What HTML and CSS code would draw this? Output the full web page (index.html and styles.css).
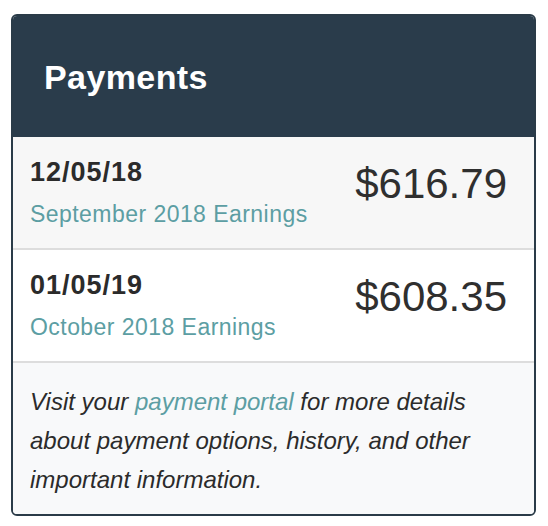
FILE: index.html
```html
<!DOCTYPE html>
<html>
<head>
<meta charset="utf-8">
<link rel="stylesheet" href="styles.css">
</head>
<body>
<div class="card">
  <div class="card-header">
    <h2 class="title">Payments</h2>
  </div>
  <div class="row row-alt">
    <div class="info">
      <div class="date">12/05/18</div>
      <div class="label">September 2018 Earnings</div>
    </div>
    <div class="amount">$616.79</div>
  </div>
  <div class="row">
    <div class="info">
      <div class="date">01/05/19</div>
      <div class="label">October 2018 Earnings</div>
    </div>
    <div class="amount">$608.35</div>
  </div>
  <div class="card-footer">
    <p class="note">Visit your <a class="link" href="#">payment portal</a> for more details about payment options, history, and other important information.</p>
  </div>
</div>
</body>
</html>
```
FILE: styles.css
```css
html, body {
  margin: 0;
  padding: 0;
  background: #ffffff;
}
body {
  padding: 14px 12px 0 11px;
  font-family: "Liberation Sans", Arial, sans-serif;
  color: #2b2b2b;
}
.card {
  width: 521px;
  border: 2px solid #2a3b48;
  border-radius: 6px;
  overflow: hidden;
  background: #fff;
}
.card-header {
  background: #2a3c4b;
  height: 121px;
  display: flex;
  align-items: center;
  padding-left: 31px;
}
.title {
  margin: 0;
  color: #ffffff;
  font-size: 34px;
  font-weight: bold;
  line-height: 40px;
  letter-spacing: 0.4px;
}
.row {
  display: flex;
  justify-content: space-between;
  align-items: flex-start;
  height: 113px;
  box-sizing: border-box;
  padding: 19px 27px 0 17px;
  border-bottom: 2px solid #dddddd;
  background: #ffffff;
}
.row-alt {
  background: #f7f7f7;
}
.date {
  font-size: 27px;
  font-weight: bold;
  line-height: 32px;
  letter-spacing: 1px;
  color: #2b2b2b;
}
.label {
  margin-top: 12px;
  font-size: 23px;
  line-height: 28px;
  letter-spacing: 0.45px;
  color: #5c9ea3;
}
.amount {
  font-size: 42px;
  line-height: 50px;
  margin-top: 3px;
  color: #2f2f2f;
}
.card-footer {
  background: #f8f9fa;
  padding: 19px 40px 15px 17px;
}
.note {
  margin: 0;
  font-size: 24px;
  font-style: italic;
  line-height: 39px;
  color: #2b2b2b;
}
.link {
  color: #5c9ea3;
  text-decoration: none;
}
```
